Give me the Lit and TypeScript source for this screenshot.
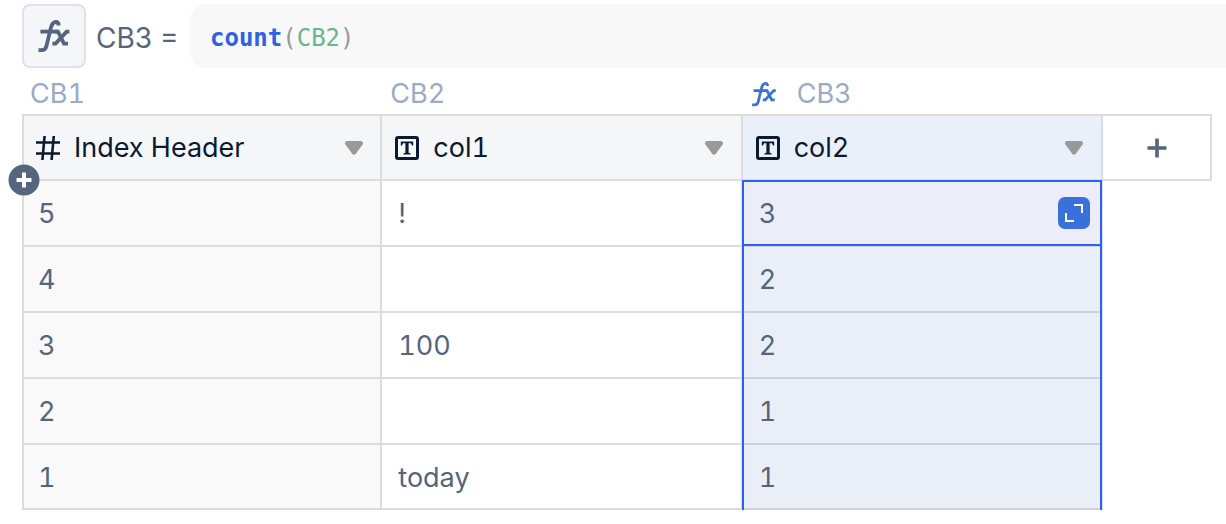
import { LitElement, html, css, svg, nothing } from "lit";
import { customElement, state } from "lit/decorators.js";

type Kind = "number" | "text";
interface Column {
  id: string;
  name: string;
  kind: Kind;
  computed?: boolean;
}

const COLUMNS: Column[] = [
  { id: "CB1", name: "Index Header", kind: "number" },
  { id: "CB2", name: "col1", kind: "text" },
  { id: "CB3", name: "col2", kind: "text", computed: true },
];

const ROWS: string[][] = [
  ["5", "!", "3"],
  ["4", "", "2"],
  ["3", "100", "2"],
  ["2", "", "1"],
  ["1", "today", "1"],
];

const fxGlyph = svg`
  <path d="M0.5 31.2H3.6Q7.4 31.2 8.4 27.2L13 8.4Q14.4 3 18 3Q20.6 3 20.6 6.6" />
  <path d="M2.4 12.6H19.6" />
  <path d="M17 12.6H20L26 24.6H30" />
  <path d="M31.4 12.6H28.6L17.6 24.6H14.4" />
`;

const numberIcon = html`<svg class="kind" viewBox="0 0 24 24" aria-hidden="true">
  <path d="M8.6 0L6.4 24M17.8 0L15.6 24M0 6.5H24M0 17.5H24" fill="none" stroke="currentColor" stroke-width="2.6" />
</svg>`;

const textIcon = html`<svg class="kind" viewBox="0 0 24 24" aria-hidden="true">
  <rect x="1.5" y="1.5" width="21" height="21" rx="1.5" fill="none" stroke="currentColor" stroke-width="3" />
  <path d="M5.8 5.5H18.2V9.4H17L16 7.2H13.6V16.8L15.6 17.4V18.4H8.4V17.4L10.4 16.8V7.2H8L7 9.4H5.8Z" fill="currentColor" />
</svg>`;

@customElement("formula-bar")
class FormulaBar extends LitElement {
  @state() private formula = "count(CB2)";

  static styles = css`
    :host {
      display: flex;
      align-items: center;
      color: #55657e;
      font-size: 28px;
      line-height: 32px;
    }
    .fx {
      box-sizing: border-box;
      flex: none;
      display: grid;
      place-items: center;
      width: 64px;
      height: 64px;
      padding: 0;
      border: 2px solid #e0e1ef;
      border-radius: 8px;
      background: #f4f6f8;
      color: inherit;
    }
    .fx svg {
      width: 32px;
      height: 34px;
      fill: none;
      stroke: currentColor;
      stroke-width: 3.8;
    }
    .target {
      flex: none;
      width: 104px;
      box-sizing: border-box;
      padding: 3px 0 0 10px;
      white-space: nowrap;
    }
    .editor {
      flex: 1;
      min-width: 0;
      display: grid;
      align-items: center;
      height: 64px;
      box-sizing: border-box;
      padding: 3px 0 0 20px;
      border-radius: 16px 0 0 16px;
      background: #f8f8f8;
    }
    .code,
    .input {
      grid-area: 1 / 1;
      margin: 0;
      padding: 0;
      font: 24px / 32px "DejaVu Sans Mono", monospace;
      white-space: pre;
    }
    .input {
      border: 0;
      outline: 0;
      width: 100%;
      background: none;
      color: transparent;
      caret-color: #2f62e3;
    }
    .fn {
      color: #2f62e3;
      font-weight: 700;
    }
    .ref {
      color: #68b78f;
    }
    .punct {
      color: #999;
    }
  `;

  private highlight() {
    return (this.formula.match(/[a-z]+|[A-Z]+\d*|[^a-zA-Z]+/g) ?? []).map((t) => {
      const cls = /^[a-z]/.test(t) ? "fn" : /^[A-Z]/.test(t) ? "ref" : "punct";
      return html`<span class=${cls}>${t}</span>`;
    });
  }

  render() {
    return html`
      <button class="fx" aria-label="Insert function">
        <svg viewBox="0 0 32 34" aria-hidden="true">${fxGlyph}</svg>
      </button>
      <label class="target" for="formula">CB3 =</label>
      <div class="editor">
        <div class="code" aria-hidden="true">${this.highlight()}</div>
        <input
          class="input"
          id="formula"
          spellcheck="false"
          .value=${this.formula}
          @input=${(e: Event) => (this.formula = (e.target as HTMLInputElement).value)}
        />
      </div>
    `;
  }
}

@customElement("data-grid")
class DataGrid extends LitElement {
  static styles = css`
    :host {
      display: block;
      color: #55657e;
      font-size: 27px;
      font-variant-numeric: tabular-nums;
      line-height: 32px;
    }
    table {
      width: 100%;
      table-layout: fixed;
      border-collapse: separate;
      border-spacing: 0;
    }
    .add-col {
      width: 109px;
    }
    th,
    td {
      box-sizing: border-box;
      padding: 0;
      font-weight: 400;
      text-align: left;
    }
    button {
      padding: 0;
      border: 0;
      background: none;
      color: inherit;
      font: inherit;
    }
    svg {
      display: block;
    }
    .id {
      height: 46px;
      padding: 5px 8px 0;
      color: #9aaac7;
    }
    .id-inner {
      display: flex;
      align-items: center;
      gap: 20px;
    }
    .id .fx {
      width: 26px;
      height: 26px;
      fill: none;
      stroke: #3a70dc;
      stroke-width: 3.6;
    }
    .head {
      position: relative;
      height: 67px;
      border: solid #dcdcdc;
      border-width: 2px 2px 2px 0;
      background: #f4f6f8;
      color: #0b1a30;
    }
    .head:first-child {
      border-left-width: 2px;
    }
    .head.computed {
      background: #e9f0fa;
    }
    .head-inner {
      display: flex;
      align-items: center;
      padding: 0 17px 0 13px;
    }
    .head:first-child .head-inner {
      padding: 0 16px 0 12px;
    }
    .name {
      flex: 1;
      padding-left: 14px;
    }
    .kind {
      width: 24px;
      height: 24px;
    }
    .menu svg {
      width: 20px;
      height: 16px;
      fill: #999;
    }
    .head.add {
      background: #fff;
      color: #55657e;
    }
    .add button {
      display: grid;
      place-items: center;
      width: 100%;
      height: 63px;
    }
    .add svg {
      width: 20px;
      height: 20px;
    }
    .insert {
      position: absolute;
      left: -16px;
      bottom: -17px;
      z-index: 1;
    }
    .insert svg {
      width: 32px;
      height: 32px;
    }
    td {
      position: relative;
      height: 66px;
      border: solid #dcdcdc;
      border-width: 0 2px 2px 0;
      padding: 2px 16px 0;
    }
    tr:last-child td {
      height: 65px;
    }
    td:first-child {
      border-left-width: 2px;
      padding-left: 14px;
      background: #f9f9f9;
    }
    td.computed {
      background: #eaeef7;
      border-bottom-color: #cdd1dd;
    }
    td.computed::after {
      content: "";
      position: absolute;
      inset: -1px -1px -2px;
      border: solid #2b62f6;
      border-width: 0 2px;
      pointer-events: none;
    }
    td.active {
      padding-top: 0;
      background: #ecedf9;
    }
    td.active::after {
      inset: -1px -1px -1px;
      border-width: 2px;
      z-index: 1;
    }
    .active span {
      padding-top: 2px;
    }
    .cell {
      display: flex;
      align-items: center;
      justify-content: space-between;
      margin-right: -5px;
    }
    .expand svg {
      width: 32px;
      height: 32px;
    }
  `;

  render() {
    return html`
      <table>
        <colgroup>
          ${COLUMNS.map(() => html`<col />`)}
          <col class="add-col" />
        </colgroup>
        <thead>
          <tr>
            ${COLUMNS.map(
              (c) => html`<th class="id">
                <div class="id-inner">
                  ${c.computed
                    ? html`<svg class="fx" viewBox="0 0 32 34" aria-hidden="true">${fxGlyph}</svg>`
                    : nothing}
                  <span>${c.id}</span>
                </div>
              </th>`
            )}
          </tr>
          <tr>
            ${COLUMNS.map(
              (c, i) => html`<th class="head ${c.computed ? "computed" : ""}" scope="col">
                <div class="head-inner">
                  ${c.kind === "number" ? numberIcon : textIcon}
                  <span class="name">${c.name}</span>
                  <button class="menu" aria-label="${c.name} menu">
                    <svg viewBox="0 0 20 16" aria-hidden="true">
                      <path d="M3 1H17Q20 1.6 18.6 4.4L12 13.4Q10 16 8 13.4L1.4 4.4Q0 1.6 3 1Z" />
                    </svg>
                  </button>
                </div>
                ${i === 0
                  ? html`<button class="insert" aria-label="Insert row">
                      <svg viewBox="0 0 32 32" aria-hidden="true">
                        <circle cx="16" cy="16" r="15.5" fill="#55657e" />
                        <path d="M8.5 16H23.5M16 8.5V23.5" stroke="#fff" stroke-width="4" />
                      </svg>
                    </button>`
                  : nothing}
              </th>`
            )}
            <th class="head add">
              <button aria-label="Add column">
                <svg viewBox="0 0 20 20" aria-hidden="true">
                  <path d="M0.5 10H19.5M10 0.5V19.5" stroke="currentColor" stroke-width="3.6" />
                </svg>
              </button>
            </th>
          </tr>
        </thead>
        <tbody>
          ${ROWS.map(
            (row, r) => html`<tr>
              ${row.map((value, c) => {
                const computed = COLUMNS[c].computed;
                const active = computed && r === 0;
                return html`<td class="${computed ? "computed" : ""} ${active ? "active" : ""}">
                  <div class="cell">
                    <span>${value}</span>
                    ${active
                      ? html`<button class="expand" aria-label="Expand cell">
                          <svg viewBox="0 0 32 32" aria-hidden="true">
                            <rect width="32" height="32" rx="7" fill="#3a70dc" />
                            <path d="M16 8H24V16M8 16V24H16" fill="none" stroke="#fff" stroke-width="2" />
                          </svg>
                        </button>`
                      : nothing}
                  </div>
                </td>`;
              })}
            </tr>`
          )}
        </tbody>
      </table>
    `;
  }
}

@customElement("app-root")
class AppRoot extends LitElement {
  static styles = css`
    :host {
      display: block;
      padding: 4px 0 14px 22px;
      background: #fff;
      font-family: Inter, "Liberation Sans", sans-serif;
    }
    data-grid {
      margin-right: 14px;
    }
  `;

  render() {
    return html`<formula-bar></formula-bar><data-grid></data-grid>`;
  }
}
